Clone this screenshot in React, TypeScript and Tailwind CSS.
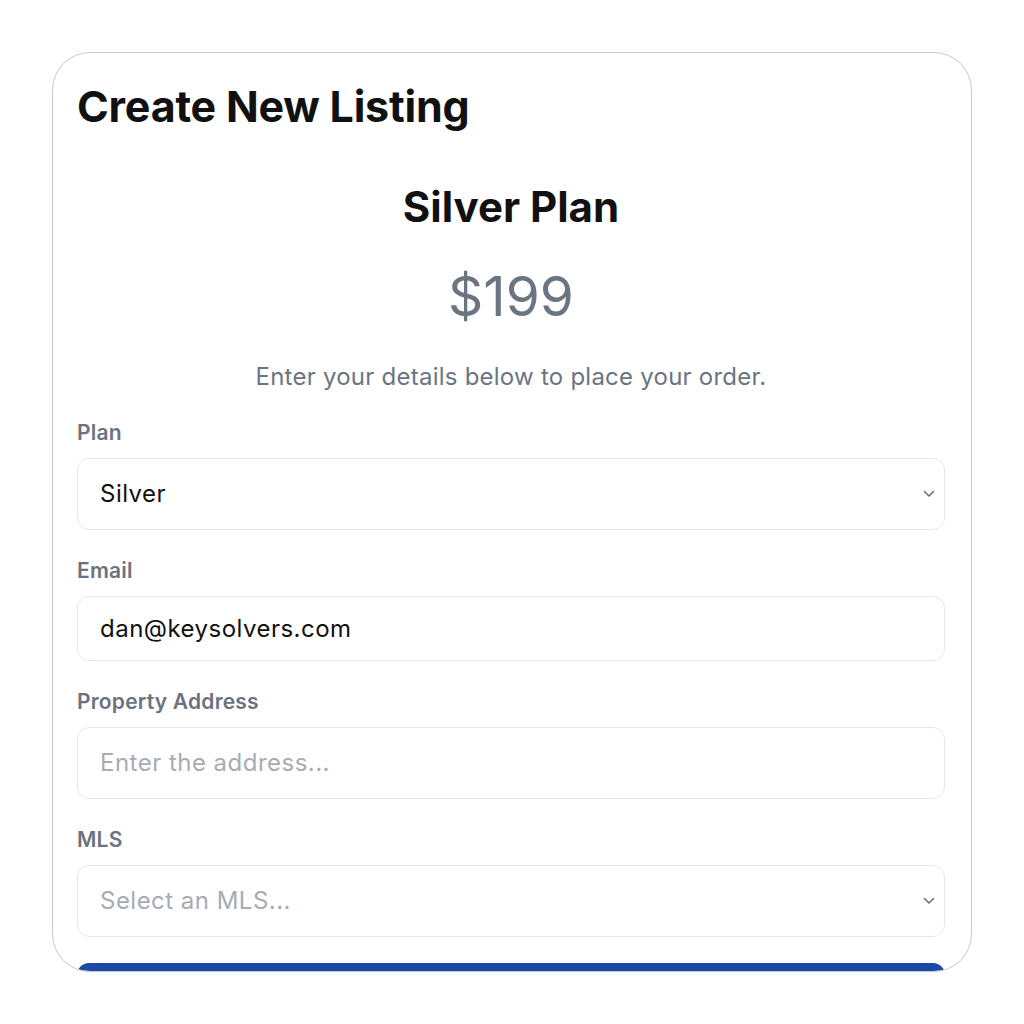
import React from "react";

const font = { fontFamily: "Inter, 'Noto Sans', sans-serif" };

function Chevron() {
  return (
    <svg width="12" height="8" viewBox="0 0 12 8" className="absolute right-[9px] top-1/2 -translate-y-1/2" fill="none">
      <path d="M1.5 1.5L6 6L10.5 1.5" stroke="#6b7280" strokeWidth="1.6" strokeLinecap="round" strokeLinejoin="round" />
    </svg>
  );
}

type FieldProps = {
  label: string;
  children: React.ReactNode;
};

function Field(props: FieldProps) {
  return (
    <div className="flex flex-col">
      <label className="text-[21px] leading-[28px] font-semibold tracking-[0.01em] text-[#6b7280]">{props.label}</label>
      <div className="mt-[11px]">{props.children}</div>
    </div>
  );
}

export default function App() {
  return (
    <div className="w-[1024px] h-[1024px] bg-white pt-[52px] pl-[52px]" style={font}>
      <div className="w-[920px] h-[920px] overflow-hidden rounded-[38px] border border-[#c6cad4] bg-white pl-[24px] pr-[26px]">
        <h1 className="mt-[29px] text-[43px] leading-[48px] font-bold tracking-[-0.005em] text-[#111111]">Create New Listing</h1>
        <h2 className="mt-[53px] text-center text-[42px] leading-[48px] font-bold text-[#111111]">Silver Plan</h2>
        <p className="mt-[35px] text-center text-[55px] leading-[60px] font-normal text-[#6b7581]">$199</p>
        <p className="mt-[35px] text-center text-[24px] leading-[32px] tracking-[0.01em] text-[#6b7581]">Enter your details below to place your order.</p>

        <div className="mt-[26px] flex flex-col gap-[27px]">
          <Field label="Plan">
            <div className="relative flex h-[72px] items-center rounded-[12px] border border-[#e5e7eb] bg-white px-[22px]">
              <span className="text-[24px] tracking-[0.02em] text-[#111111]">Silver</span>
              <Chevron />
            </div>
          </Field>
          <Field label="Email">
            <div className="flex h-[65px] items-center rounded-[12px] border border-[#e5e7eb] bg-white px-[22px]">
              <span className="text-[24px] tracking-[0.02em] text-[#111111]">dan@keysolvers.com</span>
            </div>
          </Field>
          <Field label="Property Address">
            <div className="flex h-[72px] items-center rounded-[12px] border border-[#e5e7eb] bg-white px-[22px]">
              <span className="text-[24px] tracking-[0.02em] text-[#a7abb3]">Enter the address...</span>
            </div>
          </Field>
          <Field label="MLS">
            <div className="relative flex h-[72px] items-center rounded-[12px] border border-[#e5e7eb] bg-white px-[22px]">
              <span className="text-[24px] tracking-[0.02em] text-[#a7abb3]">Select an MLS...</span>
              <Chevron />
            </div>
          </Field>
        </div>

        <button aria-label="Create Listing" className="mt-[26px] h-[60px] w-full rounded-[12px] bg-[#1a4aa6]" />
      </div>
    </div>
  );
}
